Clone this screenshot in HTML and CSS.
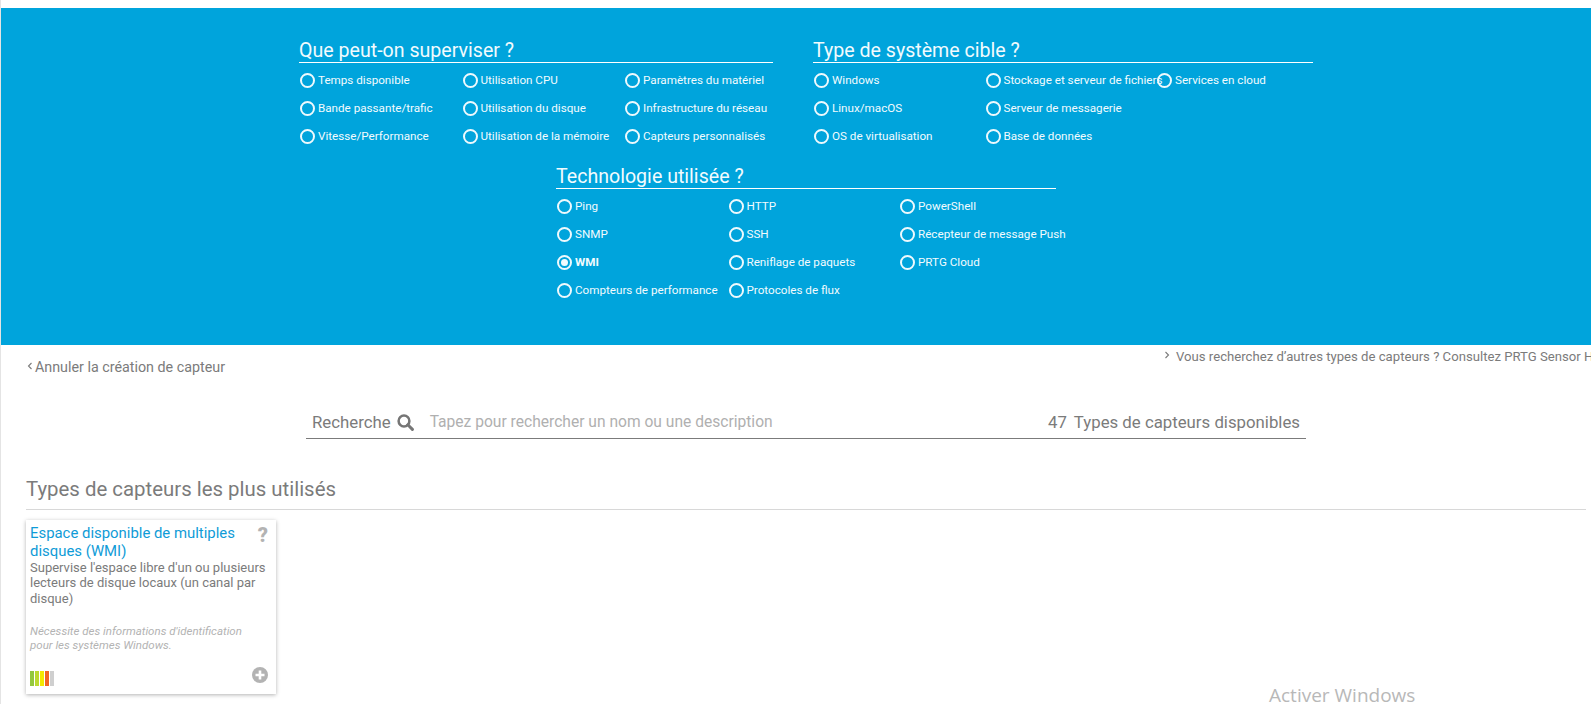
FILE: index.html
```html
<!DOCTYPE html>
<html lang="fr">
<head>
<meta charset="utf-8">
<title>Ajouter un capteur</title>
<link rel="stylesheet" href="styles.css">
</head>
<body>
<div class="page">
  <section class="filters">
    <div class="filters-inner">
      <div class="group group-a">
        <h2 class="group-title">Que peut-on superviser ?</h2>
        <div class="options options-a">
          <label class="opt"><span class="radio"></span>Temps disponible</label>
          <label class="opt"><span class="radio"></span>Utilisation CPU</label>
          <label class="opt"><span class="radio"></span>Paramètres du matériel</label>
          <label class="opt"><span class="radio"></span>Bande passante/trafic</label>
          <label class="opt"><span class="radio"></span>Utilisation du disque</label>
          <label class="opt"><span class="radio"></span>Infrastructure du réseau</label>
          <label class="opt"><span class="radio"></span>Vitesse/Performance</label>
          <label class="opt"><span class="radio"></span>Utilisation de la mémoire</label>
          <label class="opt"><span class="radio"></span>Capteurs personnalisés</label>
        </div>
      </div>
      <div class="group group-b">
        <h2 class="group-title">Type de système cible ?</h2>
        <div class="options">
          <label class="opt"><span class="radio"></span>Windows</label>
          <label class="opt"><span class="radio"></span>Stockage et serveur de fichiers</label>
          <label class="opt"><span class="radio"></span>Services en cloud</label>
          <label class="opt"><span class="radio"></span>Linux/macOS</label>
          <label class="opt"><span class="radio"></span>Serveur de messagerie</label>
          <span class="opt"></span>
          <label class="opt"><span class="radio"></span>OS de virtualisation</label>
          <label class="opt"><span class="radio"></span>Base de données</label>
        </div>
      </div>
      <div class="group group-c">
        <h2 class="group-title">Technologie utilisée ?</h2>
        <div class="options">
          <label class="opt"><span class="radio"></span>Ping</label>
          <label class="opt"><span class="radio"></span>HTTP</label>
          <label class="opt"><span class="radio"></span>PowerShell</label>
          <label class="opt"><span class="radio"></span>SNMP</label>
          <label class="opt"><span class="radio"></span>SSH</label>
          <label class="opt"><span class="radio"></span>Récepteur de message Push</label>
          <label class="opt opt-on"><span class="radio"></span>WMI</label>
          <label class="opt"><span class="radio"></span>Reniflage de paquets</label>
          <label class="opt"><span class="radio"></span>PRTG Cloud</label>
          <label class="opt"><span class="radio"></span>Compteurs de performance</label>
          <label class="opt"><span class="radio"></span>Protocoles de flux</label>
        </div>
      </div>
    </div>
  </section>

  <div class="links">
    <a class="back"><svg class="chev" width="6" height="8" viewBox="0 0 6 8"><path d="M4.5 1 1.5 4l3 3" fill="none" stroke="currentColor" stroke-width="1.1"/></svg>Annuler la création de capteur</a>
    <a class="hub"><svg class="chev" width="6" height="8" viewBox="0 0 6 8"><path d="M1.5 1l3 3-3 3" fill="none" stroke="currentColor" stroke-width="1.1"/></svg>Vous recherchez d’autres types de capteurs ? Consultez PRTG Sensor Hub</a>
  </div>

  <div class="search">
    <span class="search-label">Recherche</span>
    <svg class="search-icon" width="17" height="17" viewBox="0 0 17 17"><circle cx="7" cy="7" r="5.4" fill="none" stroke="#767676" stroke-width="2.5"/><path d="M10.8 10.8l4.6 4.6" stroke="#767676" stroke-width="3" stroke-linecap="round"/></svg>
    <span class="search-hint">Tapez pour rechercher un nom ou une description</span>
    <span class="search-count">47</span>
    <span class="search-total">Types de capteurs disponibles</span>
  </div>

  <h3 class="section-title">Types de capteurs les plus utilisés</h3>

  <article class="card">
    <div class="card-head">
      <div class="card-title">Espace disponible de multiples disques (WMI)</div>
      <span class="card-help">?</span>
    </div>
    <p class="card-desc">Supervise l'espace libre d'un ou plusieurs lecteurs de disque locaux (un canal par disque)</p>
    <p class="card-note">Nécessite des informations d'identification pour les systèmes Windows.</p>
    <div class="card-foot">
      <div class="bars"><i class="b1"></i><i class="b2"></i><i class="b3"></i><i class="b4"></i><i class="b5"></i></div>
      <svg class="card-add" width="16" height="16" viewBox="0 0 16 16"><circle cx="8" cy="8" r="8" fill="#b3b3b3"/><path d="M8 3.5v9M3.5 8h9" stroke="#fff" stroke-width="2.6"/></svg>
    </div>
  </article>
  <div class="watermark">Activer Windows</div>
</div>
</body>
</html>
```

FILE: styles.css
```css
* { box-sizing: border-box; }
html, body { margin: 0; height: 100%; overflow: hidden; background: #fff; }
body { font-family: Roboto, "Liberation Sans", sans-serif; color: #7b7b7b; }
.page { position: relative; height: 704px; width: 1591px; padding: 8px 0 0 0; border-left: 1px solid #e4e4e4; overflow: hidden; }

.filters { background: #00a4dc; height: 337px; color: #f2fbfe; }
.filters-inner { display: grid; grid-template-columns: 474px 500px; column-gap: 40px; padding: 27px 0 0 298px; }
.group-c { grid-column: 1 / 3; margin: 11px 0 0 257px; width: 500px; }
.group-title { margin: 0; font-size: 19.6px; font-weight: 400; line-height: 31px; height: 28px; border-bottom: 1px solid #fff; }
.options { display: grid; grid-template-columns: repeat(3, 171.5px); grid-auto-rows: 28px; padding-top: 3px; }
.options-a { grid-template-columns: repeat(3, 162.5px); }
.opt { display: flex; align-items: center; font-size: 11.67px; white-space: nowrap; padding-left: 1px; gap: 3px; }
.opt-on { font-weight: 700; }
.radio { flex: none; width: 15px; height: 15px; border: 2px solid #eef9fd; border-radius: 50%; display: block; position: relative; }
.opt-on .radio::after { content: ""; position: absolute; left: 2px; top: 2px; width: 7px; height: 7px; border-radius: 50%; background: #f2fbfe; }

.links { height: 49px; position: relative; }
.chev { display: inline-block; vertical-align: 2px; }
.back { position: absolute; left: 26px; top: 14px; font-size: 14.3px; white-space: nowrap; }
.back .chev { margin-right: 2px; }
.hub { position: absolute; left: 1163px; top: 4px; font-size: 13.15px; white-space: nowrap; }
.hub .chev { margin-right: 6px; }

.search { margin-left: 305px; width: 1000px; height: 45px; border-bottom: 1px solid #7b7b7b; display: flex; align-items: center; padding: 12px 0 0 6px; font-size: 16.8px; }
.search-icon { margin-left: 6px; }
.search-hint { margin-left: 16px; font-size: 15.6px; color: #b0b0b0; flex: 1; }
.search-total { margin-left: 7px; margin-right: 6px; }

.section-title { margin: 37px 0 0 25px; width: 1560px; font-size: 20.4px; font-weight: 400; line-height: 27px; height: 34px; border-bottom: 1px solid #d8d8d8; }

.card { margin: 10px 0 0 25px; width: 250px; height: 174px; background: #fff; box-shadow: 0 1px 4px rgba(0,0,0,.3); padding: 4px 4px; position: relative; }
.card-head { display: flex; justify-content: space-between; }
.card-title { width: 210px; color: #0f9bd7; font-size: 14.9px; line-height: 18px; }
.card-help { font-size: 20px; font-weight: 900; color: #b3b3b3; margin: 1px 4px 0 0; line-height: 20px; }
.card-desc { margin: 0; font-size: 13px; line-height: 15.3px; }
.card-note { margin: 18px 0 0; max-width: 225px; font-size: 11.5px; line-height: 14.5px; font-style: italic; color: #b3b3b3; }
.card-foot { position: absolute; left: 4px; right: 8px; bottom: 8px; display: flex; justify-content: space-between; align-items: flex-end; }
.card-add { margin-bottom: 3px; }
.bars { display: flex; gap: 1px; }
.bars i { display: block; width: 4px; height: 15px; }
.b1 { background: #94c83d; }
.b2 { background: #bcd92f; }
.b3 { background: #f4e800; }
.b4 { background: #f26522; }
.b5 { background: #cfcfcf; }
.watermark { position: absolute; left: 1268px; top: 686px; font-family: "Open Sans", sans-serif; font-size: 19px; line-height: 18px; color: #b8b8b8; white-space: nowrap; }
```
